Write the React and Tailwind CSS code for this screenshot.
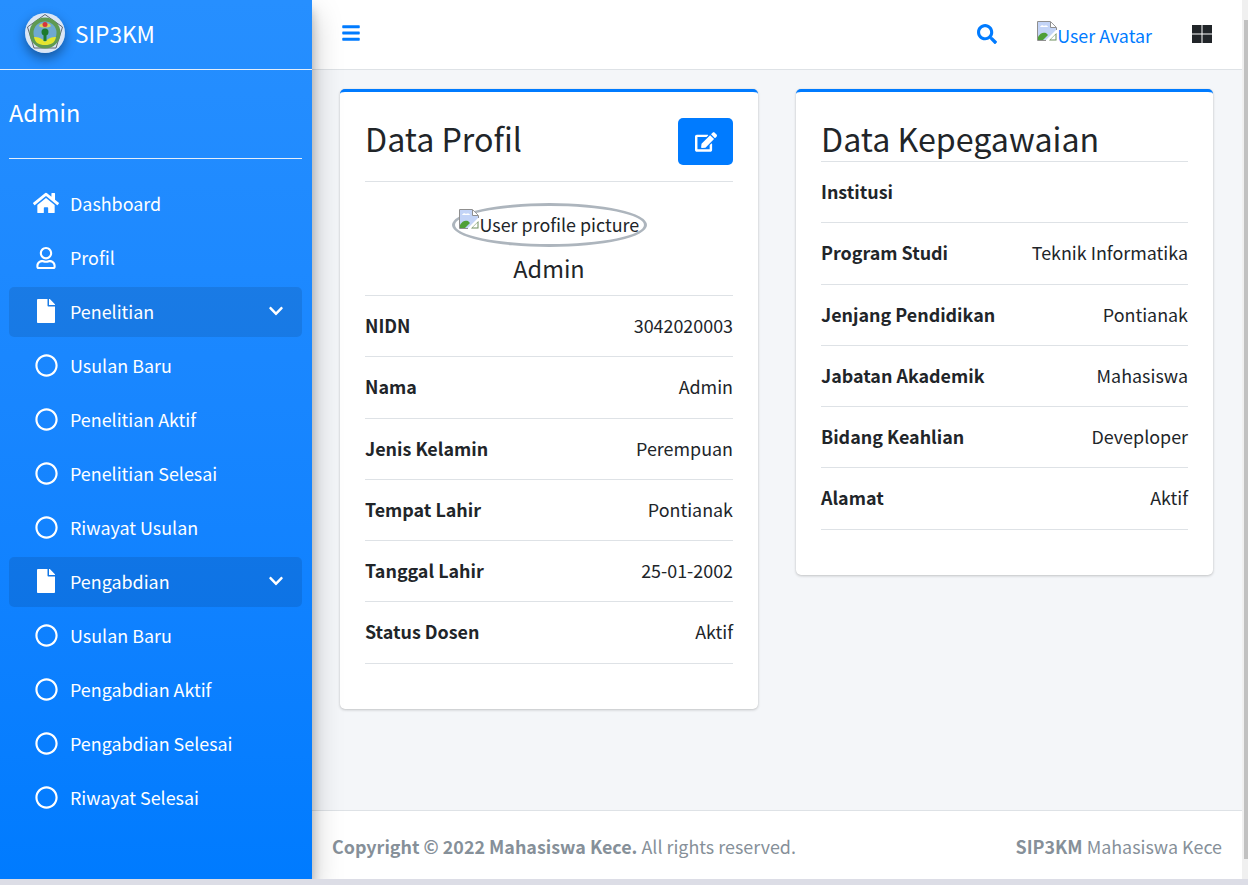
import React from "react";
import {
  FaBars,
  FaChevronDown,
  FaEdit,
  FaFile,
  FaHome,
  FaRegCircle,
  FaRegUser,
  FaSearch,
} from "react-icons/fa";

const BrokenImage = () => (
  <svg width="20" height="20" viewBox="0 0 20 20" className="shrink-0">
    <path d="M1 1H13L19 7V9L9 19H1Z" fill="#c3d4f7" />
    <path d="M9 19.5H0.5V0.5H13.5L19.5 6.5V9" fill="none" stroke="#8f8f8f" />
    <path d="M13.5 1V6.5H19" fill="#fff" stroke="#8f8f8f" />
    <path d="M3 6c1-2 3-2 4-1 2-1 4 0 4 1Z" fill="#fff" />
    <path d="M1 19v-3c2-4 5-5 8-4l2 2-5 5Z" fill="#4f9f37" />
    <path d="M12 19.5L19.5 12V19.5Z" fill="#6f8f5f" />
    <path d="M13.5 18.5L18.5 13.5V18.5Z" fill="#fff" />
  </svg>
);

const Logo = () => (
  <div className="w-10 h-10 rounded-full shrink-0 shadow-[0_5px_12px_rgba(0,0,0,0.4)]">
    <svg width="40" height="40" viewBox="0 0 40 40">
      <circle cx="20" cy="20" r="20" fill="#dbe6f5" />
      <path d="M20 1.5L37.5 14L31 35H9L2.5 14Z" fill="none" stroke="#5f6670" strokeWidth="1" />
      <circle cx="20" cy="20" r="15.5" fill="#5f9a52" />
      <circle cx="20" cy="20" r="11.5" fill="#6fa9cf" />
      <path d="M9 24c4 0 8 1 11 5 3-4 7-5 11-5-1 6-5 8-11 8S10 30 9 24Z" fill="#e4e62e" />
      <path d="M14 13c1-4 11-4 12 0-2 2-10 2-12 0Z" fill="#d8d65a" />
      <circle cx="20" cy="11.5" r="2.5" fill="#d9353a" />
      <path d="M18.5 19h3v9h-3Z" fill="#1c7a2e" />
      <circle cx="20" cy="19" r="3.5" fill="#1c7a2e" />
    </svg>
  </div>
);

const GridIcon = () => (
  <svg width="20" height="18" viewBox="0 0 20 18" className="ml-[40px] mb-[1px]" fill="#212529">
    <rect x="0" y="0" width="9.5" height="8.5" />
    <rect x="10.5" y="0" width="9.5" height="8.5" />
    <rect x="0" y="9.5" width="9.5" height="8.5" />
    <rect x="10.5" y="9.5" width="9.5" height="8.5" />
  </svg>
);

const NavItem = ({ icon, label, open }) => (
  <div
    className={`h-[50px] ml-[9px] mr-[10px] flex items-center rounded-[5px] text-white ${
      open ? "bg-[rgba(0,0,0,0.1)]" : ""
    }`}
  >
    <span className="w-[61px] pl-[24px] flex shrink-0">
      <span className="w-[26px] flex justify-center">{icon}</span>
    </span>
    <span className="pb-[2px]">{label}</span>
    {open && <FaChevronDown className="ml-auto mr-[18px] mb-[2px] text-[16px]" />}
  </div>
);

const circle = <FaRegCircle className="text-[23px] mb-[2px]" />;
const file = <FaFile className="text-[24px] mb-[2px]" />;

const navItems = [
  { icon: <FaHome className="text-[26px] mb-[2px]" />, label: "Dashboard" },
  { icon: <FaRegUser className="text-[22px]" />, label: "Profil" },
  { icon: file, label: "Penelitian", open: true },
  { icon: circle, label: "Usulan Baru" },
  { icon: circle, label: "Penelitian Aktif" },
  { icon: circle, label: "Penelitian Selesai" },
  { icon: circle, label: "Riwayat Usulan" },
  { icon: file, label: "Pengabdian", open: true },
  { icon: circle, label: "Usulan Baru" },
  { icon: circle, label: "Pengabdian Aktif" },
  { icon: circle, label: "Pengabdian Selesai" },
  { icon: circle, label: "Riwayat Selesai" },
];

const profil = [
  ["NIDN", "3042020003"],
  ["Nama", "Admin"],
  ["Jenis Kelamin", "Perempuan"],
  ["Tempat Lahir", "Pontianak"],
  ["Tanggal Lahir", "25-01-2002"],
  ["Status Dosen", "Aktif"],
];

const kepegawaian = [
  ["Institusi", ""],
  ["Program Studi", "Teknik Informatika"],
  ["Jenjang Pendidikan", "Pontianak"],
  ["Jabatan Akademik", "Mahasiswa"],
  ["Bidang Keahlian", "Deveploper"],
  ["Alamat", "Aktif"],
];

const InfoRow = ({ label, value }) => (
  <div className="h-[61.25px] box-border border-b border-[#dee2e6] pb-[2px] flex items-center justify-between">
    <b className="font-bold">{label}</b>
    <span>{value}</span>
  </div>
);

export default function App() {
  return (
    <div
      className="h-[885px] w-[1248px] overflow-hidden flex flex-col bg-[#dcdde6] text-[17.9px] leading-[30px] text-[#212529]"
      style={{ fontFamily: '"Noto Sans CJK SC", "Noto Sans", sans-serif' }}
    >
      <div className="h-[879px] flex overflow-hidden">
        <aside className="w-[312px] shrink-0 relative z-10 bg-linear-to-b from-[#268fff] to-[#007bff] shadow-[0_14px_28px_rgba(0,0,0,0.25),0_10px_10px_rgba(0,0,0,0.22)]">
          <div className="h-[70px] box-border border-b border-[#e4eefb] flex items-center pl-[25px] pb-[3px] gap-[10px] text-white text-[22.6px]">
            <Logo />
            <span className="pt-[1px]">SIP3KM</span>
          </div>
          <div className="ml-[9px] mr-[10px] h-[89px] box-border border-b border-[#e4eefb] pt-[22px] text-[23.5px] leading-[40px] text-white">
            Admin
          </div>
          <nav className="mt-[20px] flex flex-col gap-[4px]">
            {navItems.map((item, i) => (
              <NavItem key={i} {...item} />
            ))}
          </nav>
        </aside>

        <main className="flex-1 flex flex-col bg-[#f4f6f9]">
          <header className="h-[70px] box-border shrink-0 bg-white border-b border-[#dee2e6] flex items-center pl-[29px] pr-[30px] pb-[1px]">
            <FaBars className="text-[#007bff] text-[20px] mb-[2px]" />
            <FaSearch className="ml-auto text-[#007bff] text-[20px] mb-[1px]" />
            <div className="ml-[40px] flex items-start text-[#007bff] pt-[2px]">
              <span className="mt-[1px]">
                <BrokenImage />
              </span>
              <span>User Avatar</span>
            </div>
            <GridIcon />
          </header>

          <div className="flex-1 flex items-start gap-[38px] pl-[28px] pr-[29px] pt-[19px]">
            <section className="w-[418px] h-[620px] box-border bg-white rounded-[5px] border-t-[3px] border-[#007bff] shadow-[0_0_1px_rgba(0,0,0,0.125),0_1px_3px_rgba(0,0,0,0.2)] px-[25px] pt-[26px]">
              <div className="h-[63px] border-b border-[#dee2e6] flex items-start justify-between box-content">
                <h3 className="text-[32.2px] leading-[41px]">Data Profil</h3>
                <button className="w-[55px] h-[47px] bg-[#007bff] rounded-[5px] text-white flex items-center justify-center text-[22px]">
                  <FaEdit />
                </button>
              </div>
              <div className="flex flex-col items-center h-[114px] box-border border-b border-[#dee2e6] pt-[21px]">
                <div className="w-[195px] h-[44px] box-border border-[3px] border-[#adb5bd] rounded-[50%] pl-[4px] flex items-start">
                  <span className="mt-[3px] flex items-start leading-[30px] whitespace-nowrap">
                    <BrokenImage />
                    <span className="ml-[1px]">User profile picture</span>
                  </span>
                </div>
                <div className="mt-[5px] text-[23.5px] leading-[32px]">Admin</div>
              </div>
              {profil.map(([label, value]) => (
                <InfoRow key={label} label={label} value={value} />
              ))}
            </section>

            <section className="w-[417px] h-[486px] box-border bg-white rounded-[5px] border-t-[3px] border-[#007bff] shadow-[0_0_1px_rgba(0,0,0,0.125),0_1px_3px_rgba(0,0,0,0.2)] px-[25px] pt-[26px]">
              <h3 className="h-[44px] box-border border-b border-[#dee2e6] text-[32.2px] leading-[41px]">
                Data Kepegawaian
              </h3>
              {kepegawaian.map(([label, value]) => (
                <InfoRow key={label} label={label} value={value} />
              ))}
            </section>
          </div>

          <footer className="h-[69px] box-border shrink-0 bg-white border-t border-[#dee2e6] flex items-center justify-between pl-[20px] pr-[20px] pt-[2px] text-[#869099]">
            <span>
              <b className="font-bold">Copyright © 2022 Mahasiswa Kece.</b> All rights reserved.
            </span>
            <span>
              <b className="font-bold">SIP3KM</b> Mahasiswa Kece
            </span>
          </footer>
        </main>

        <div className="w-[6px] shrink-0 bg-[#f0f0f0] pt-[20px] pb-[20px] pl-[2px]">
          <div className="h-full bg-[#c1c1c1]" />
        </div>
      </div>
    </div>
  );
}
